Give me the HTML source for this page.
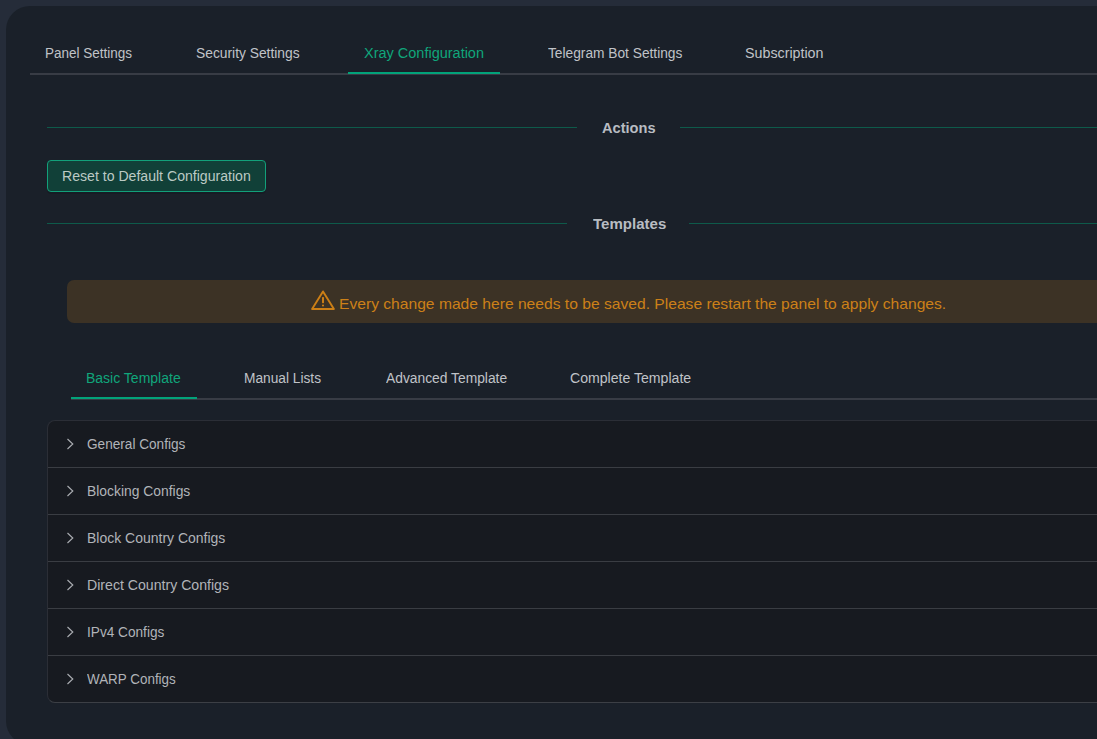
<!DOCTYPE html>
<html><head><meta charset="utf-8">
<style>
*{box-sizing:border-box;margin:0;padding:0}
html,body{width:1097px;height:739px;overflow:hidden;background:#252c39}
body{font-family:"Liberation Sans",sans-serif;position:relative}
.card{position:absolute;left:6px;top:6px;width:1300px;height:739px;background:#1a2029;border-radius:24px}
.tx{position:absolute;white-space:nowrap;line-height:16px;height:16px;transform-origin:0 0}
.ln{position:absolute}
.btn{position:absolute;left:47px;top:160px;width:219px;height:32px;background:#114038;border:1px solid #12a07a;border-radius:4px;box-shadow:0 2px 0 rgba(0,0,0,0.12)}
.alert{position:absolute;left:67px;top:280px;width:1200px;height:43px;background:#3c3225;border-radius:7px}
.coll{position:absolute;left:47px;top:420px;width:1200px;height:283px;background:#171a20;border:1px solid #2b2e36;border-bottom-color:#3c3f45;border-radius:8px;overflow:hidden}
.sep{position:absolute;left:0;width:100%;height:1px;background:#3a3d43}
.chev{position:absolute}
</style></head>
<body>
<div class="card"></div>
<!-- top tabs -->
<div class="ln" style="left:30px;top:73px;width:1067px;height:2px;background:#383c45"></div>
<div class="ln" style="left:348px;top:72px;width:152px;height:2px;background:#02a37a"></div>
<!-- dividers -->
<div class="ln" style="left:47px;top:127px;width:530px;height:1px;background:#0e5a4a"></div>
<div class="ln" style="left:680px;top:127px;width:417px;height:1px;background:#0e5a4a"></div>
<div class="ln" style="left:47px;top:223px;width:520px;height:1px;background:#0e5a4a"></div>
<div class="ln" style="left:689px;top:223px;width:408px;height:1px;background:#0e5a4a"></div>
<div class="btn"></div>
<div class="alert"></div>
<svg style="position:absolute;left:306px;top:284px" width="36" height="32" viewBox="0 0 36 32">
  <path d="M17 7.4 L27.9 25 L6.1 25 Z" fill="none" stroke="#cc7f16" stroke-width="1.9" stroke-linejoin="round"/>
  <rect x="16" y="13" width="2" height="6.2" rx="0.6" fill="#cc7f16"/>
  <circle cx="17" cy="21.5" r="1.05" fill="#cc7f16"/>
</svg>
<!-- inner tabs -->
<div class="ln" style="left:71px;top:398px;width:1026px;height:2px;background:#383c45"></div>
<div class="ln" style="left:71px;top:397px;width:126px;height:2px;background:#02a37a"></div>
<div class="coll">
  <div class="sep" style="top:46px"></div>
  <div class="sep" style="top:93px"></div>
  <div class="sep" style="top:140px"></div>
  <div class="sep" style="top:187px"></div>
  <div class="sep" style="top:234px"></div>
</div>
<svg class="chev" style="left:66px;top:438px" width="9" height="12" viewBox="0 0 9 12"><path d="M1.5 1 L6.8 6 L1.5 11" fill="none" stroke="#a9acb1" stroke-width="1.15"/></svg>
<svg class="chev" style="left:66px;top:485px" width="9" height="12" viewBox="0 0 9 12"><path d="M1.5 1 L6.8 6 L1.5 11" fill="none" stroke="#a9acb1" stroke-width="1.15"/></svg>
<svg class="chev" style="left:66px;top:532px" width="9" height="12" viewBox="0 0 9 12"><path d="M1.5 1 L6.8 6 L1.5 11" fill="none" stroke="#a9acb1" stroke-width="1.15"/></svg>
<svg class="chev" style="left:66px;top:579px" width="9" height="12" viewBox="0 0 9 12"><path d="M1.5 1 L6.8 6 L1.5 11" fill="none" stroke="#a9acb1" stroke-width="1.15"/></svg>
<svg class="chev" style="left:66px;top:626px" width="9" height="12" viewBox="0 0 9 12"><path d="M1.5 1 L6.8 6 L1.5 11" fill="none" stroke="#a9acb1" stroke-width="1.15"/></svg>
<svg class="chev" style="left:66px;top:673px" width="9" height="12" viewBox="0 0 9 12"><path d="M1.5 1 L6.8 6 L1.5 11" fill="none" stroke="#a9acb1" stroke-width="1.15"/></svg>
<div class="tx" style="left:45.41px;top:44.90px;font-size:14px;font-weight:normal;color:#c0c3c8;transform:scaleX(0.9645)">Panel Settings</div>
<div class="tx" style="left:196.01px;top:44.90px;font-size:14px;font-weight:normal;color:#c0c3c8;transform:scaleX(0.9865)">Security Settings</div>
<div class="tx" style="left:363.59px;top:44.90px;font-size:14px;font-weight:normal;color:#10a67b;transform:scaleX(1.0348)">Xray Configuration</div>
<div class="tx" style="left:548.40px;top:44.90px;font-size:14px;font-weight:normal;color:#c0c3c8;transform:scaleX(0.9810)">Telegram Bot Settings</div>
<div class="tx" style="left:744.58px;top:44.90px;font-size:14px;font-weight:normal;color:#c0c3c8;transform:scaleX(1.0187)">Subscription</div>
<div class="tx" style="left:601.60px;top:119.90px;font-size:15px;font-weight:bold;color:#b8bcc2;transform:scaleX(0.9746)">Actions</div>
<div class="tx" style="left:592.60px;top:216.20px;font-size:15px;font-weight:bold;color:#b8bcc2;transform:scaleX(1.0027)">Templates</div>
<div class="tx" style="left:61.99px;top:167.80px;font-size:14px;font-weight:normal;color:#bccac4;transform:scaleX(1.0065)">Reset to Default Configuration</div>
<div class="tx" style="left:339.36px;top:296.30px;font-size:15px;font-weight:normal;color:#cc8018;transform:scaleX(1.0417)">Every change made here needs to be saved. Please restart the panel to apply changes.</div>
<div class="tx" style="left:86.00px;top:369.70px;font-size:14px;font-weight:normal;color:#10a67b;transform:scaleX(1.0000)">Basic Template</div>
<div class="tx" style="left:244.21px;top:369.70px;font-size:14px;font-weight:normal;color:#c0c3c8;transform:scaleX(0.9796)">Manual Lists</div>
<div class="tx" style="left:385.61px;top:369.70px;font-size:14px;font-weight:normal;color:#c0c3c8;transform:scaleX(0.9869)">Advanced Template</div>
<div class="tx" style="left:569.80px;top:369.70px;font-size:14px;font-weight:normal;color:#c0c3c8;transform:scaleX(1.0067)">Complete Template</div>
<div class="tx" style="left:87.20px;top:436.10px;font-size:14px;font-weight:normal;color:#b1b4b9;transform:scaleX(0.9723)">General Configs</div>
<div class="tx" style="left:87.20px;top:483.10px;font-size:14px;font-weight:normal;color:#b1b4b9;transform:scaleX(0.9904)">Blocking Configs</div>
<div class="tx" style="left:86.60px;top:530.00px;font-size:14px;font-weight:normal;color:#b1b4b9;transform:scaleX(0.9986)">Block Country Configs</div>
<div class="tx" style="left:86.59px;top:577.00px;font-size:14px;font-weight:normal;color:#b1b4b9;transform:scaleX(1.0086)">Direct Country Configs</div>
<div class="tx" style="left:86.64px;top:624.00px;font-size:14px;font-weight:normal;color:#b1b4b9;transform:scaleX(0.9744)">IPv4 Configs</div>
<div class="tx" style="left:87.02px;top:671.10px;font-size:14px;font-weight:normal;color:#b1b4b9;transform:scaleX(0.9587)">WARP Configs</div>
</body></html>
